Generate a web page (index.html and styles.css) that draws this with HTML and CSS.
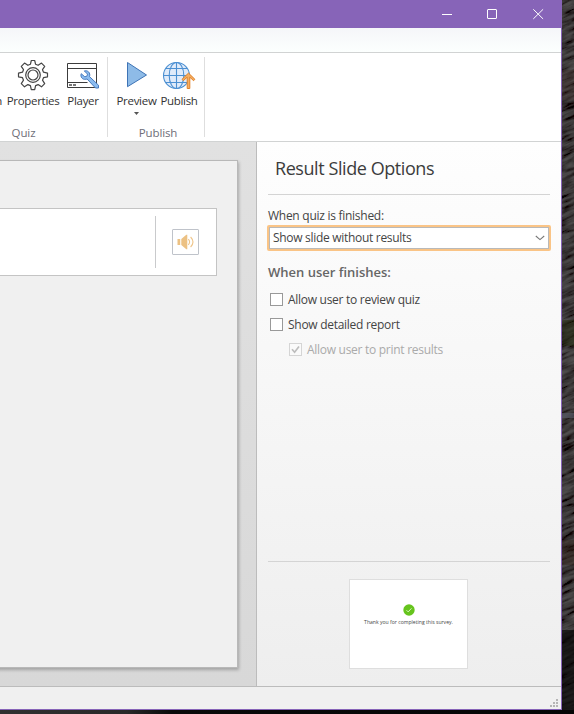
FILE: index.html
```html
<!DOCTYPE html>
<html lang="en">
<head>
<meta charset="utf-8">
<title>Result Slide Options</title>
<link rel="stylesheet" href="styles.css">
</head>
<body>
<div class="desktop">
  <svg class="wallpaper" width="574" height="714" aria-hidden="true">
    <defs>
      <filter id="rock" x="0" y="0" width="100%" height="100%">
        <feTurbulence type="fractalNoise" baseFrequency="0.05 0.3" numOctaves="4" seed="8"/>
        <feColorMatrix values="0.5 0 0 0 -0.12  0.5 0 0 0 -0.135  0.5 0 0 0 -0.135  0 0 0 0 1"/>
      </filter>
      <linearGradient id="ground"><stop offset="0" stop-color="#303030"/><stop offset=".22" stop-color="#292929"/><stop offset=".3" stop-color="#090909"/><stop offset="1" stop-color="#050505"/></linearGradient>
    </defs>
    <g transform="rotate(-24 568 300)"><rect x="300" y="-100" width="600" height="840" filter="url(#rock)"/></g>
    <rect x="562" y="0" width="12" height="714" fill="#060606" opacity=".45"/>
    <rect x="562" y="70" width="12" height="30" fill="#492a25" opacity=".2"/>
    <rect x="562" y="320" width="12" height="26" fill="#202a06" opacity=".4"/>
    <rect x="562" y="413" width="12" height="5" fill="#555964" opacity=".7"/>
    <rect x="562" y="540" width="12" height="25" fill="#38251c" opacity=".4"/>
    <rect x="562" y="630" width="12" height="84" fill="#000" opacity=".6"/>
    <rect y="710" width="574" height="4" fill="url(#ground)"/>
  </svg>
  <div class="window">
    <header class="titlebar">
      <svg class="caption" viewBox="0 0 46 28"><path d="M17 14.5h10"/></svg>
      <svg class="caption" viewBox="0 0 46 28"><rect x="16.5" y="9.5" width="9" height="9" rx=".5"/></svg>
      <svg class="caption" viewBox="0 0 46 28"><path d="M16.3 9.3l9.8 9.6M26.1 9.3l-9.8 9.6"/></svg>
    </header>
    <div class="tabs"></div>
    <div class="ribbon">
      <section class="group quiz">
        <div class="tools">
          <div class="tool clipped"><span class="label">n</span></div>
          <div class="tool properties">
            <svg width="32" height="32" viewBox="0 0 32 32" fill="none" stroke="#454545" stroke-width="1.2" stroke-linejoin="round">
              <path d="M14.3 1.5h3.4l.9 3.8 2.5 1 3.4-2.2 3.2 3.2-2.2 3.4 1 2.5 4 .9v3.7l-4 .9-1 2.5 2.2 3.4-3.2 3.2-3.4-2.2-2.5 1-.9 4h-3.4l-.9-4-2.5-1-3.4 2.2-3.2-3.2 2.2-3.4-1-2.5-4-.9v-3.7l4-.9 1-2.5-2.2-3.4 3.2-3.2 3.4 2.2 2.5-1z"/>
              <circle cx="16" cy="16" r="7.3"/><circle cx="16" cy="16" r="5"/>
            </svg>
            <span class="label">Properties</span>
          </div>
          <div class="tool player">
            <svg width="32" height="32" viewBox="0 0 32 32" fill="none">
              <path d="M.5 4.5h29v24H.5zM.5 9.5h29" stroke="#3c3c3c"/>
              <path d="M.5 23.5h20" stroke="#3c3c3c"/>
              <path d="M2 26h3M6 26h3" stroke="#777" stroke-width="2"/>
              <path d="M17.3 11.9l3.2 3.2-.6 2.1-2.1.6-3.6-3.1c-1.1 3 1.2 6.4 4.8 5.5l1.1-.2 8.4 9h3v-2.8l-9-8.6c1.2-3.8-1.7-6.6-5.2-5.7z" fill="#8bbcf0" stroke="#477bc0"/>
            </svg>
            <span class="label">Player</span>
          </div>
        </div>
        <div class="group-name">Quiz</div>
      </section>
      <section class="group publish">
        <div class="tools">
          <div class="tool preview">
            <svg width="32" height="32" viewBox="0 0 32 32"><path d="M6.5 3.5v24.2L25.5 16z" fill="#8ebbe7" stroke="#3e73b5"/></svg>
            <span class="label">Preview</span>
            <svg class="drop" width="5" height="3" viewBox="0 0 5 3"><path d="M0 0h5L2.5 3z" fill="#555"/></svg>
          </div>
          <div class="tool send">
            <svg width="34" height="32" viewBox="0 0 34 32" fill="none">
              <g stroke="#4c90d2" stroke-width="1.1"><circle cx="14.5" cy="16.5" r="13" fill="#e0ebfa"/><ellipse cx="14.5" cy="16.5" rx="7.3" ry="13"/><path d="M14.5 3.5v26M1.5 16.5h26M4 9.5h21M4 23.5h21"/></g>
              <path d="M25.2 29.5V18.2l-3.9 3.5-1.3-1.4 6.5-6.2 6.4 6.2-1.3 1.4-3.8-3.5v11.3z" fill="#f5ae62" stroke="#e18127"/>
            </svg>
            <span class="label">Publish</span>
          </div>
        </div>
        <div class="group-name">Publish</div>
      </section>
    </div>
    <main class="workspace">
      <section class="canvas">
        <div class="slide">
          <div class="question">
            <div class="media">
              <div class="sound">
                <svg width="18" height="16" viewBox="0 0 18 16"><path d="M.5 5h2.7v6H.5zM4.3 5l5-4.3h1v14.6h-1L4.3 11z" fill="#ecc183"/><path d="M11.3 5.2q2.6 2.8 0 5.6M13.6 3q4.8 5 0 10" fill="none" stroke="#efc58a" stroke-width="1.1"/></svg>
              </div>
            </div>
          </div>
        </div>
      </section>
      <aside class="options">
        <h1>Result Slide Options</h1>
        <label class="field-label"><span>When quiz is finished:</span></label>
        <div class="select"><span>Show slide without results</span><svg width="10" height="6" viewBox="0 0 10 6"><path d="M.8 1L5 4.6 9.2 1" fill="none" stroke="#777" stroke-width="1.1"/></svg></div>
        <h2><span>When user finishes:</span></h2>
        <div class="check"><i class="box"></i><span>Allow user to review quiz</span></div>
        <div class="check"><i class="box"></i><span>Show detailed report</span></div>
        <div class="check disabled"><i class="box"><svg width="11" height="11" viewBox="0 0 11 11"><path d="M2 5.2l2.6 3L9 2.5" fill="none" stroke="#bdbdbd" stroke-width="1.7"/></svg></i><span>Allow user to print results</span></div>
        <div class="preview-area">
          <div class="thumb">
            <svg width="12" height="12" viewBox="0 0 12 12"><circle cx="6" cy="6" r="5.7" fill="#66c41d"/><path d="M3.5 6.2l1.7 1.7 3.3-3.6" fill="none" stroke="#d5f4b9"/></svg>
            <span>Thank you for completing this survey.</span>
          </div>
        </div>
      </aside>
    </main>
    <footer class="status">
      <svg width="8" height="8" viewBox="0 0 8 8" fill="#b5b5b5"><path d="M6 0h2v2H6zM3 3h2v2H3zM6 3h2v2H6zM0 6h2v2H0zM3 6h2v2H3zM6 6h2v2H6z"/></svg>
    </footer>
  </div>
</div>
</body>
</html>
```

FILE: styles.css
```css
* { box-sizing: border-box; }
body { margin: 0; font: 12px/16px "Open Sans", "Noto Sans", sans-serif; color: #444; overflow: hidden; }
svg { display: block; flex: none; }
span { white-space: nowrap; }

.desktop { position: relative; width: 574px; height: 714px; background: #0a0a0a; overflow: hidden; }
.wallpaper { position: absolute; inset: 0; }
.window { position: relative; width: 562px; height: 710px; display: flex; flex-direction: column; border: solid #8764b8; border-width: 0 1px 1px 0; background: #fff; }

.titlebar { height: 28px; flex: none; display: flex; justify-content: flex-end; background: #8764b8; }
.caption { width: 46px; height: 28px; fill: none; stroke: #fff; stroke-width: 1; }
.caption:last-child { margin-right: -2px; }
.tabs { height: 25px; flex: none; background: linear-gradient(#f5f6f9, #fcfffe); border-bottom: 1px solid #d1d3d3; }

.ribbon { height: 89px; flex: none; display: flex; background: #fff; border-bottom: 1px solid #d1d3d3; }
.group { height: 80px; margin-top: 4px; border-right: 1px solid #dedede; display: flex; flex-direction: column; }
.quiz { width: 108px; }
.publish { width: 97px; padding-left: 7px; }
.tools { display: flex; padding-top: 2px; }
.tool { display: flex; flex-direction: column; align-items: center; height: 60px; font-size: 11.5px; letter-spacing: -0.3px; color: #333; }
.label { margin-top: 2px; }
.clipped { width: 4px; overflow: hidden; align-items: flex-end; padding: 32px 2px 0 0; }
.properties { width: 58px; }
.player { width: 42px; }
.preview { width: 43px; }
.send { width: 42px; }
.drop { margin-top: 3px; }
.group-name { margin-top: 6px; font-size: 11.5px; line-height: 16px; letter-spacing: -0.1px; color: #6e6e78; text-align: center; }
.quiz .group-name { width: 47px; }
.publish .group-name { width: 86px; }

.workspace { flex: 1; display: flex; min-height: 0; }
.canvas { width: 256px; background: linear-gradient(#e1e1e1, #d8d8d8); padding-top: 18px; overflow: hidden; }
.slide { width: 248px; margin-left: -10px; height: 508px; padding-top: 47px; background: #f0f0f0; border: solid #b8b8b8; border-width: 1px 1px 1px 0; box-shadow: 1px 2px 3px rgba(0,0,0,.25); }
.question { width: 227px; height: 68px; padding: 7px 0; background: #fff; border: 1px solid #c4c4c4; border-left: 0; display: flex; justify-content: flex-end; }
.media { width: 61px; height: 52px; padding-left: 16px; border-left: 1px solid #c9cacc; display: flex; align-items: center; }
.sound { width: 27px; height: 26px; border: 1px solid #bfc3ca; border-radius: 1px; display: flex; align-items: center; justify-content: center; }

.options { width: 305px; padding: 0 11px; border-left: 1px solid #bcbcbc; background: linear-gradient(#fefefe, #eee); display: flex; flex-direction: column; }
h1 { margin: 0; height: 53px; padding: 13px 7px 0; font-size: 18px; line-height: 26px; font-weight: 400; letter-spacing: -0.43px; color: #3c3c3c; border-bottom: 1px solid #d4d4d4; }
.field-label { margin-top: 13px; height: 16px; letter-spacing: -0.27px; }
.select { margin: 1px -1px 0; width: 284px; height: 26px; padding: 0 4px; border: 2px solid #fac486; border-radius: 2px; box-shadow: inset 0 0 0 1px #b9b9b9; background: #fff; display: flex; align-items: center; justify-content: space-between; letter-spacing: -0.3px; }
h2 { margin: 12px 0 10px; font-size: 13px; line-height: 18px; font-weight: 600; color: #666; }
.check { display: flex; align-items: center; height: 17px; margin: 0 0 8px 2px; letter-spacing: -0.28px; }
.box { width: 13px; height: 13px; margin-right: 5px; border: 1px solid #999; background: #fff; }
.disabled { margin-left: 21px; color: #aaa; }
.disabled .box { border-color: #d5d5d5; background: #fafafa; }
.preview-area { margin-top: auto; height: 125px; padding-top: 17px; border-top: 1px solid #d4d4d4; }
.thumb { width: 119px; height: 90px; margin-left: 81px; background: #fff; border: 1px solid #dedede; display: flex; flex-direction: column; align-items: center; padding-top: 24px; font-size: 5.1px; line-height: 7px; }
.thumb span { margin-top: 3px; }

.status { height: 23px; flex: none; border-top: 1px solid #bcbcbc; background: #f0f0f0; display: flex; justify-content: flex-end; align-items: flex-end; padding: 0 3px 2px; }
```
